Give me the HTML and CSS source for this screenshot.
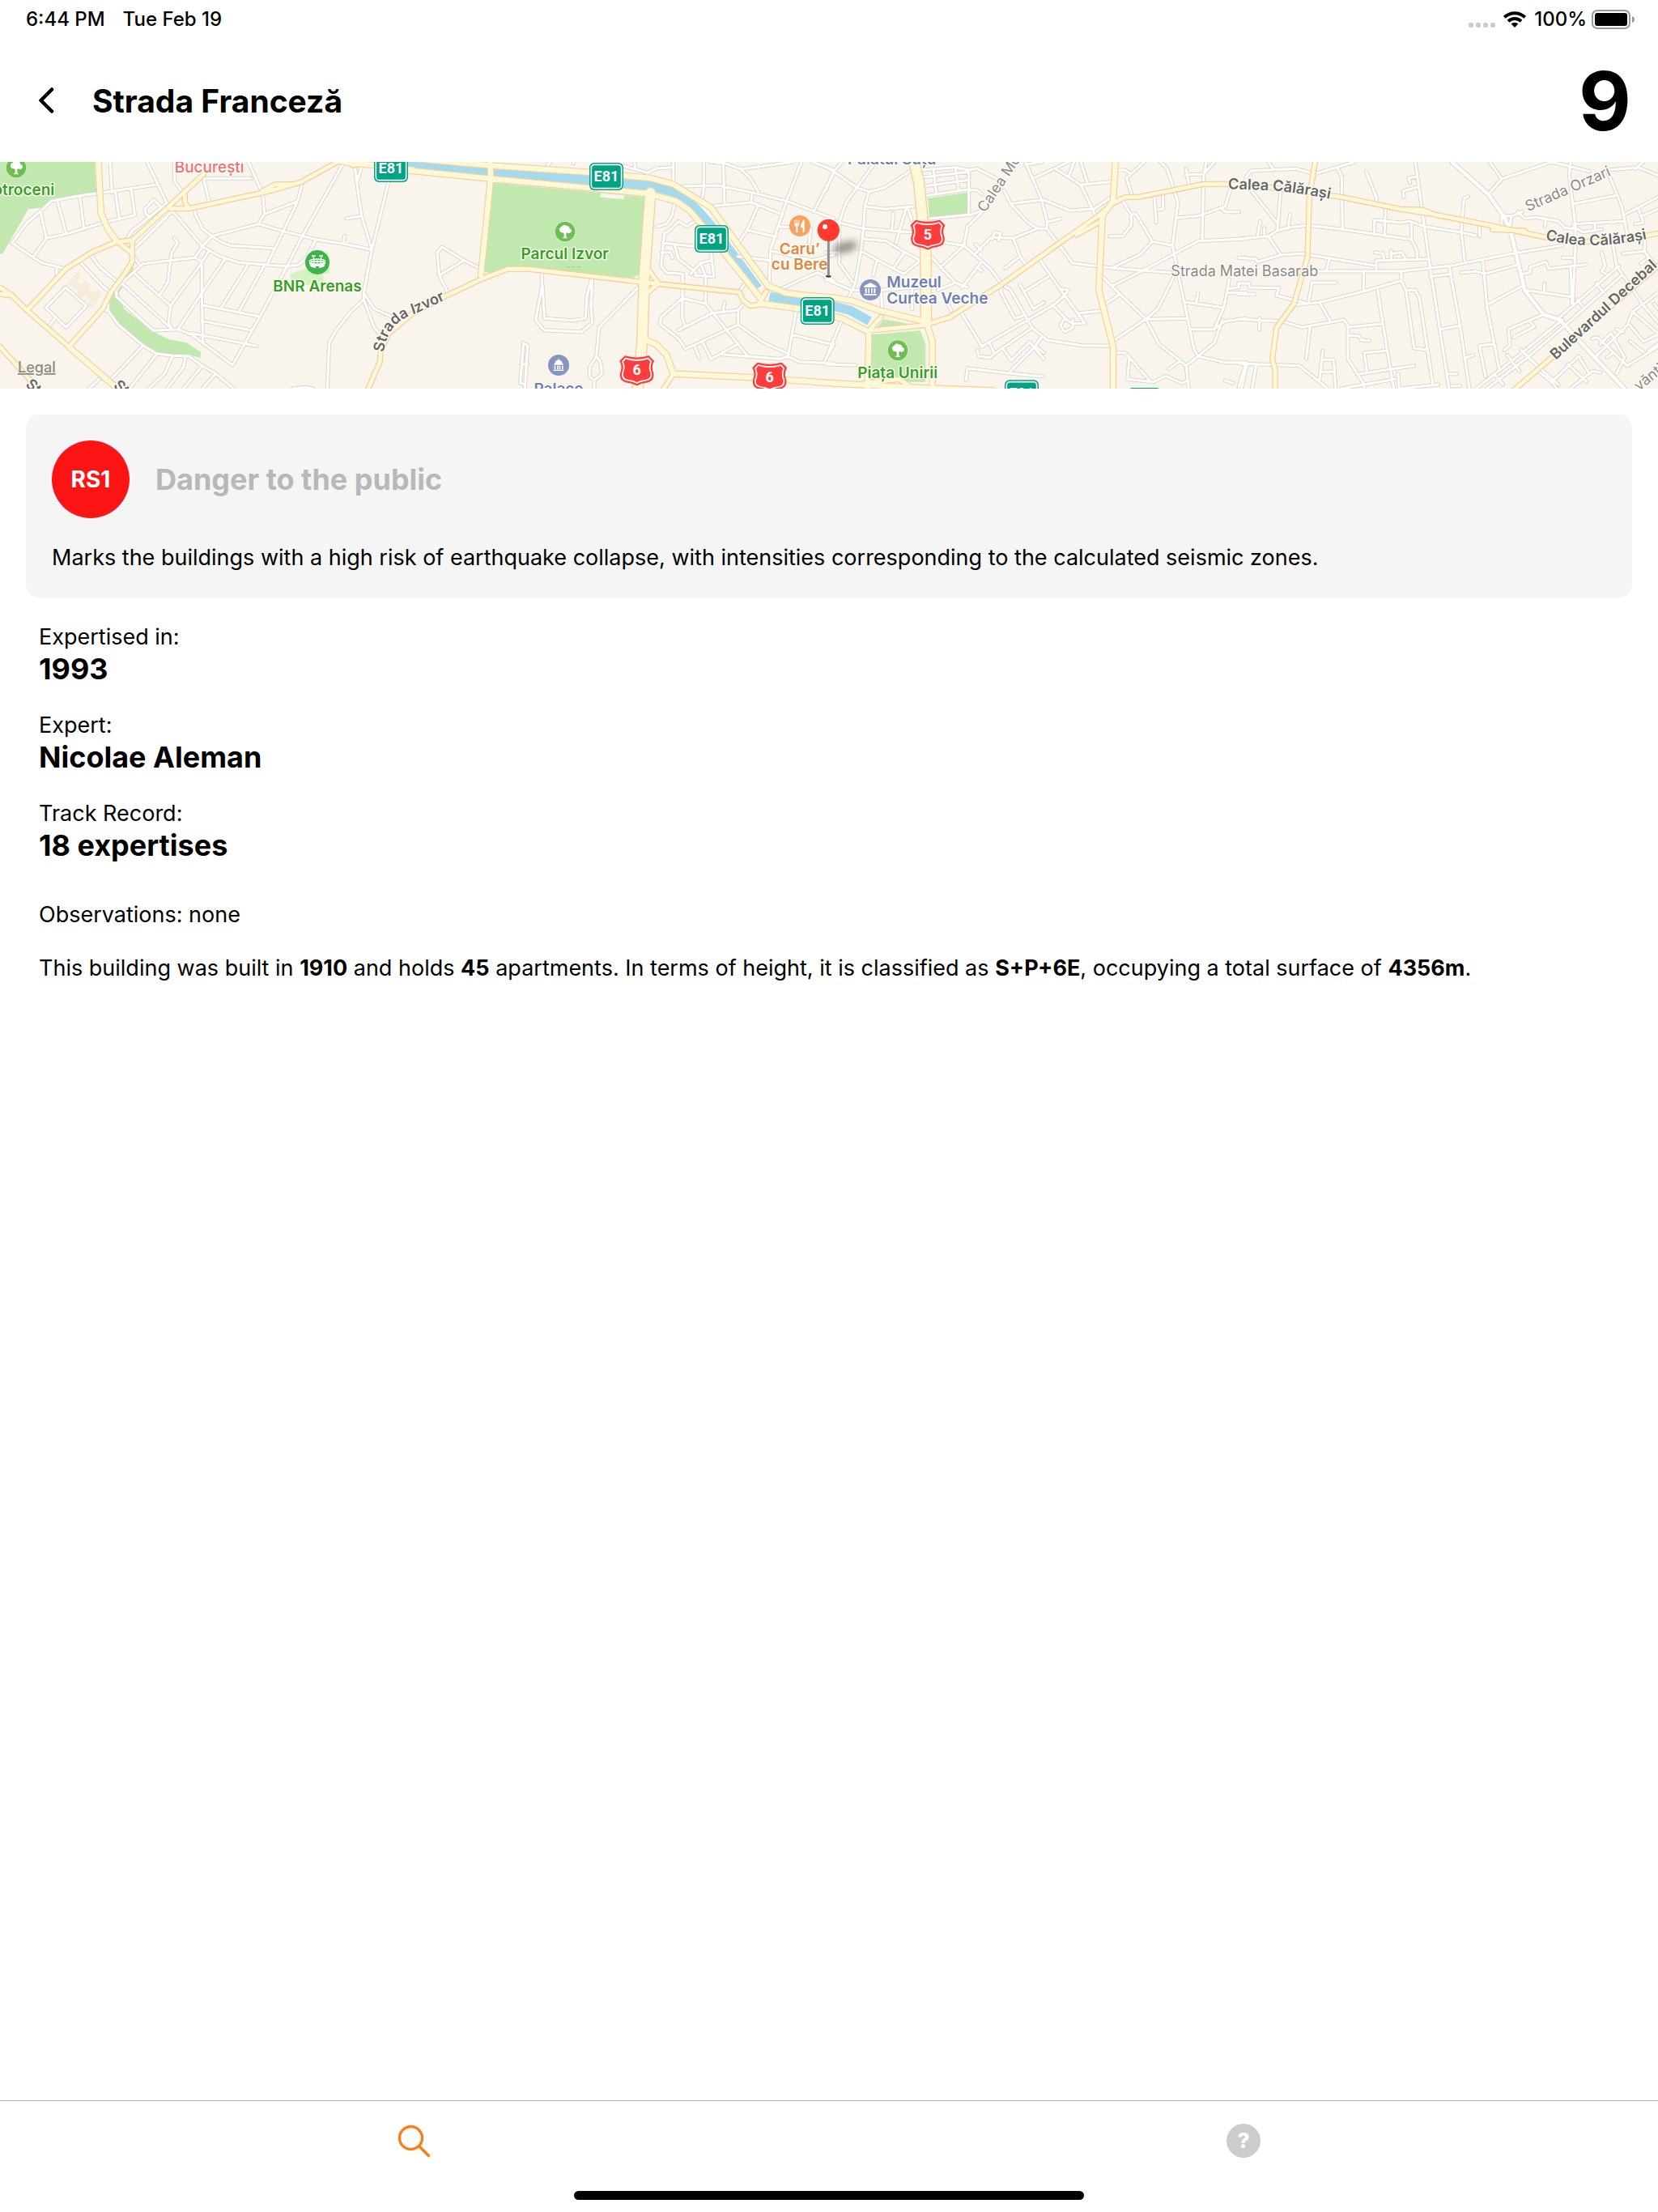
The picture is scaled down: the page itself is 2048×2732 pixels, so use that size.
FILE: index.html
```html
<!DOCTYPE html>
<html lang="en">
<head>
<meta charset="utf-8">
<meta name="viewport" content="width=device-width, initial-scale=1">
<title>Strada Franceză 9</title>
<link rel="stylesheet" href="styles.css">
</head>
<body>
<div class="status">
  <div class="status-group status-left"><span>6:44 PM</span><span>Tue Feb 19</span></div>
  <div class="status-group status-right">
    <span class="dots"><i></i><i></i><i></i><i></i></span>
    <svg class="wifi" viewBox="0 0 28 20" aria-hidden="true"><g fill="none" stroke="#000" stroke-width="4"><path d="M1.3 7.4A18.2 18.2 0 0 1 26.7 7.4"/><path d="M6 12.3A11.5 11.5 0 0 1 22 12.3"/></g><path d="M9.6 15.6A6.4 6.4 0 0 1 18.4 15.6L14 20Z"/></svg>
    <span class="percent">100%</span>
    <svg class="battery" viewBox="0 0 54 24" aria-hidden="true"><rect x="1" y="1" width="46" height="22" rx="6" fill="none" stroke="#999" stroke-width="2"/><rect x="4" y="4" width="40" height="16" rx="3"/><path d="M50 8Q53 9 53 12T50 16Z" fill="#999"/></svg>
  </div>
</div>

<header class="header">
  <button class="back" type="button" aria-label="Back"><svg viewBox="0 0 20 34" aria-hidden="true"><path d="M16 2.500L2.500 16 16 29.500" fill="none" stroke="#000" stroke-width="4.500" stroke-linecap="round" stroke-linejoin="round"/></svg></button>
  <h1 class="title">Strada Franceză</h1>
  <span class="number">9</span>
</header>

<svg class="map" viewBox="0 0 6144 840" preserveAspectRatio="xMidYMid slice" role="img" aria-label="Map of Bucharest">
  <defs>
    <filter id="soft" x="-50%" y="-80%" width="200%" height="260%"><feGaussianBlur stdDeviation="13"/></filter>
    <g id="streets">
      <path transform="translate(0 -15)" d="M408 15L415 128M545 15L622 175M372 130L296 140 190 160 150 198 100 240 45 315 122 368 158 390 240 410M372 130L585 98M150 200L172 298 122 368M172 298L245 282 383 240 500 212 486 118M213 162L246 282M296 143L311 262M427 125L442 224M646 15V85L685 140M920 15L970 125 975 150 980 208 958 245M755 76H930M755 78L775 162M210 410V435M600 185L570 155 537 188 540 208 550 215M615 170L490 270 470 300M635 200L500 335M640 198L750 328 815 365 885 388 1065 402 1108 396 1135 370 1170 305M722 190L725 212 750 262 785 290 820 312 855 325 1015 335M785 290L958 245 1050 272 1170 302 1272 318 1378 340M785 290L750 328 722 370 632 380 530 392 450 465 430 490 432 515 568 640 660 635M722 370L748 385V500L752 690M748 385L775 345M645 298L658 315 635 355 632 380 622 460 592 507M495 365L520 400M500 430L632 548M455 468L632 630M748 388L632 548 625 610 635 630M660 635L748 500 832 378M660 635L710 655 862 768 965 585 1065 400 1120 290 1275 15M1120 95L1103 160 1050 272 992 390M978 400L885 570M820 555L918 398M748 545L962 588M748 604L935 640M710 650L950 697M980 208L1100 162M1315 30L1322 90 1340 215 1378 340M1345 15L1322 90M1283 225L1340 215M1277 290L1272 318M1440 90L1378 340 1348 500V525L1300 570 1245 640 1220 685 1213 855M1348 500L1385 558 1450 588M1348 525L1385 625 1410 655M340 365L370 405 430 455M300 390L380 475 405 495M170 555L243 480 320 548 245 628ZM205 592L180 625M380 565H400L410 580 440 620 530 695 580 725 640 733 700 735 750 770 800 800 865 855M400 540V565M530 695L412 820M580 728L480 855M640 733L610 800 550 855M688 733L680 775 620 855M750 770L680 855M798 800L750 855M330 855L368 820M1085 855L1130 850 1160 855"/>
      <path transform="translate(1530 -15)" d="M240 405L190 380 108 330 90 350 98 435 132 505M98 435L190 380M478 430V480L455 600 485 638 625 645 665 610 660 550 665 450M480 470L488 595 590 602 640 595 645 510 662 450M835 480L690 628 680 735 655 775V810L672 825 700 800 695 755 680 735M672 825V855M415 855L425 695 410 685 398 835 415 840M403 765H425M510 15L490 40M595 15V20M780 30L870 55 905 38 965 35M965 15V95M820 15L825 38M868 55V75M1078 15V110L1070 165M1150 15L1155 175M1000 105L1130 102 1255 128 1385 160 1560 225M1100 15L1155 20 1215 42 1250 75 1280 125M1215 42L1410 15M1440 15L1385 160 1325 340 1320 480M1480 15L1560 45M1560 55L1485 200M1095 180L1255 165 1370 210M1258 128L1253 165M1278 180L1240 265 1200 325M1238 268L1345 292M1360 255L1430 258M1205 365L1325 380M1330 345L1480 380 1560 360M1345 495L1440 450 1500 425 1560 455M1475 262L1465 340M970 165L960 215 940 245 905 255M1045 235L1015 255 985 235 950 270 932 280 920 400 940 425 1000 430 998 590 1010 625M925 315L1060 330M922 350H955L962 370M970 325L985 375 1050 425 1045 435 1115 440 1105 350M1030 430L1065 390 1105 380M1065 390L1085 440V540M1230 465L1210 495M985 638L1110 575 1205 565 1225 540M998 520L1085 540 1160 635 1245 740M998 520L920 590 915 615 985 670 1010 708 1205 618V565M1205 618L1300 685 1390 725V740M1155 535L1150 565M1420 568L1390 735 1430 755 1560 762M1045 700L1062 742M1075 685L1105 745 1205 690M1145 728L1360 745 1390 735M1405 655L1550 690M1560 690L1525 755"/>
      <path transform="translate(3060 -15)" d="M0 35L30 50 115 110 160 125 215 112 320 45M60 15L30 50 0 120M185 15L115 110 75 165 50 240V390L100 460M160 125L145 180 140 260 130 345 110 460 85 520M145 180L220 190 325 180M0 225L50 240 140 262 315 275M250 205L245 270M300 180L260 315M302 180L318 230M140 300L225 308 275 340 350 380M130 345L250 410 290 352M190 380L175 435M250 410L290 430 350 380M0 350H50M0 450L95 490 205 490 210 575M205 490L340 480M320 490V560M60 600L0 745M0 765L110 768M355 45L480 35 530 45 560 40 640 80M360 72L530 52M365 105L528 82M370 140L520 118 562 120 578 135M400 50L410 130M480 35L492 115M530 45V210M385 225L540 210 590 190 525 255 512 325 430 312M660 120L685 170 750 240 785 262 820 262V235L800 155 740 15M685 170L805 155 905 195 1000 188M740 25L800 15M770 75L900 15M850 40L945 100 1065 88M945 100L1000 215M920 15L900 70M945 15L970 95M1060 145L1000 185M820 238L870 225M820 262L915 390 1060 408 1280 425M785 262L695 298 612 295 550 360M618 300L625 275 648 280 640 305M695 298L720 365 745 400M720 365L665 408M512 325L610 410 650 465M512 325L425 405M395 370L425 405 480 462 525 480M555 320L575 340M578 385L505 480M560 405L578 418M480 462L415 490M440 520L465 565M650 475V500L700 595 730 585M650 465L685 490 765 630 820 675 950 695 1060 697M720 470L770 560 808 535M735 495L825 440M795 380L885 510 960 612 915 615 885 595 870 620 885 645 915 630V600M875 485L898 490 885 510 845 545 750 600 575 700M840 545L895 600M940 575L1020 567M500 570L580 700M765 630L625 725 608 690M560 712L568 735 610 740 625 725M655 705L688 750 755 682 808 745M800 665L770 705 680 795M780 700L808 722M520 822L525 780 680 798 805 810M1080 45H1110L1130 60 1115 75 1135 140M1120 70L1180 15M1100 160L1132 210V250L1100 290H1052M1132 208H1150L1210 310 1285 325M1210 310L1165 358 1060 408M1218 145L1225 240M1250 140V190L1232 192M1240 15L1265 40 1305 165 1285 325 1300 400 1365 710 1380 735 1335 770M1065 722H1110L1200 825M1125 740L1118 820 1215 830 1260 808 1320 835 1340 825M1300 222L1380 215 1480 180 1500 115M1465 185L1480 200H1532M1335 40L1345 95M1335 62L1400 60M1410 15L1400 70 1395 305M1440 15L1400 60M1560 300L1380 308 1190 410 1060 475M1025 440L1090 505 1185 595 1235 690 1310 750 1335 770 1345 855M1025 550L1090 505M1070 675L1185 598 1340 595M1185 598L1230 560 1290 440M1335 535L1475 555 1495 450M1475 555L1440 635H1355M1440 635L1480 605 1560 595M1380 500L1372 540M1535 370H1560M1490 485L1530 480V465M1490 500H1560M1470 600L1440 685 1380 735 1480 758H1560M1310 755L1272 782M1560 770L1540 855M1480 825L1510 835"/>
      <path transform="translate(4590 -15)" d="M110 15L125 38M30 100L28 70 45 48 215 40 280 60 430 15M30 100L145 245 143 270M155 130L143 270 110 290 0 300M143 270L185 258 255 250 385 265 640 302 660 340 662 375M190 210L183 262M80 235L70 290M95 260V285M110 290L155 358M0 370L65 375 70 385 155 360 230 355 510 400M335 378L325 420M295 420H600L785 400 1030 352 1200 325M510 410V380L700 375M505 350L535 355 540 380M565 345V380M572 355L605 350 618 375M368 40L382 70 385 265M472 50L512 150 508 165M545 180L540 290M503 285V230L600 240 635 235 690 255 820 275 880 288M640 240V300M655 15L710 410 780 855M660 70L630 75 635 92M665 108L610 122 612 145M930 15L975 78M925 135L975 78 1160 15M838 385L825 275 835 150 850 143M893 255V290M975 260V215H1015L1050 200M1010 215L1005 260M1035 200L1060 225 1100 220 1185 235 1210 260 1240 262M1138 232L1135 255M1160 15L1300 50M1230 15L1225 60 1248 255V330L1238 540M1365 45L1420 180 1440 280M1240 170L1395 140M1240 245L1430 235M1240 255L1275 275 1345 265M1320 240V260M1370 45L1480 35 1554 65M1500 15L1470 40M1430 210L1480 185 1554 145M1480 185L1500 240 1470 245M1495 215L1554 190M1425 355L1505 345 1520 370 1490 392M1505 300V350L1554 410M1385 310L1400 400 1490 530M1345 350L1358 400 1345 420 1360 430M1200 370H1245M1285 395L1150 410 1138 385 1080 405V425L1055 430M1230 400L1235 540M1060 490L1235 515M1133 465V500M1040 395L910 430 880 420 825 425M905 380L920 550 965 780M920 545L1050 475M780 400L820 620 855 855M710 440L785 430M748 635L820 622M463 420V495M603 420V455L462 495 300 535 205 545M360 462H272L260 530M515 490L550 710 575 855M603 455L620 490 650 705 700 712M620 490H655L670 520 700 712 720 840M300 535L340 605M160 605L235 628 390 600 405 620V745L440 800 465 840M405 628L530 615M405 658L445 660 455 675 485 677M265 625L250 745M0 598L160 605M77 595V635M312 715L300 820M312 748H352L360 855M305 793H355M550 715L465 722 475 790M450 800L650 770M380 855L465 840 580 820M590 800L595 855 740 840M465 840V855M0 762L225 770 330 855M65 768L50 855M25 765L0 850M0 465H40V480L150 482 140 510 250 538M0 505H60M780 800H808M790 845H820M845 740L870 730M945 690L892 695 915 810M1130 580L1000 635 1005 695 985 712M1080 605L1095 625 1020 665M880 855L1040 730 1200 600M920 855L1070 740 1210 620 1420 435M1190 590L1410 400M1325 465L1345 490M1255 525L1275 550M1045 710L1095 760 1185 840M995 730L1040 790M950 805L980 840M1110 790L1160 830 1260 735 1300 800M1220 765L1290 830M1160 830L1180 855M1310 670L1330 665 1440 770 1554 700M1320 740L1440 620 1460 570 1554 500M1340 690L1380 650 1430 740 1400 800M1400 635L1425 645M1460 570L1554 650M1490 535L1554 610M1540 540L1554 560M1450 680L1500 720M1520 715L1554 690M1230 855L1310 790 1340 795M1450 620L1500 680 1554 655M1365 740L1390 720"/>
    </g>
    <g id="avenues">
      <path transform="translate(0 -15)" d="M755 60L620 185 490 305 430 312 340 350 245 410 100 565M490 305V385L465 425 410 500 380 560 255 700M630 188H700L990 125 1115 90 1250 15M685 135V165L695 180M970 125L1020 98H1085M0 480L45 510 100 565 255 700M0 505L45 510M0 700L100 810 140 855M430 305L485 350M1280 15L1310 28 1340 22M1365 855L1408 755 1410 720 1440 650 1530 575 1645 515"/>
      <path transform="translate(1530 -15)" d="M115 515L252 450 350 412H430L850 460 920 468 1210 498 1225 530 1250 548 1280 545 1310 495M878 420L910 465 870 500M965 800L930 855"/>
      <path transform="translate(3060 -15)" d="M380 615L460 590 650 470 860 320 1010 215 1060 170 1110 145H1160L1400 97H1500M930 285L1010 240M160 640L370 620M160 640L205 590M140 835L270 820 320 850"/>
      <path transform="translate(4590 -15)" d="M-30 98L120 110 380 145 600 190 700 205 930 250 1140 295 1250 310H1400L1554 280M283 15L262 150 255 370 205 540 140 630 125 745 135 785V855M600 190L680 192 740 215M940 265L1060 270M1020 860L1160 740 1554 400"/>
    </g>
    <g id="boulevards">
      <path transform="translate(0 -15)" d="M364 15L374 205 398 260 430 305M255 700L430 850M1260 12L1530 45"/>
      <path transform="translate(1530 -15)" d="M-80 -5L285 28 660 54 880 75 965 98 1105 184 1316 474 1380 500 1440 508 1560 518 1630 530 1730 566 1890 605M-30 45L285 77 870 132 975 160 1025 195 1085 266 1290 522M1290 540L1440 560 1590 595 1690 645M288 15V80L252 435M862 675L900 690 940 730 965 800 1280 815 1560 835 1830 850 2150 862"/>
      <path transform="translate(3060 -15)" d="M1073 15L1065 160 1025 215 1012 490 1065 700V855M370 600L395 680V855M160 645L155 855"/>
    </g>
    <g id="arteries">
      <path transform="translate(1530 -15)" d="M880 130L857 450 850 680 833 855"/>
      <path transform="translate(3060 -15)" d="M325 5L345 90 370 340 372 610"/>
    </g>
    <symbol id="tree" viewBox="-40 -40 80 80"><circle r="39" fill="#fff" opacity=".6"/><circle r="37" fill="#6fbe54"/><path d="M-13 -18A10 10 0 0 1 4 -21A9 9 0 0 1 16 -11A8 8 0 0 1 20 4Q14 9 7 4L4 6V20L9 23V25H-9V23L-4 20V8Q-7 2 -12 4A8 8 0 0 1 -20 -3Q-24 -14 -13 -18Z" fill="#fff"/></symbol>
    <symbol id="euro" viewBox="-64 -52 128 104"><rect x="-63" y="-51" width="126" height="102" rx="18" fill="#00a382"/><rect x="-56" y="-44" width="112" height="88" rx="12" fill="none" stroke="#fff" stroke-width="5"/><text class="shield-text" y="18">E81</text></symbol>
    <symbol id="shield" viewBox="-66 -60 132 120"><g fill="#ff3c3c" stroke-linejoin="round"><path d="M-44 -53Q0 -40 44 -53L62 -35Q50 -15 60 10Q64 38 35 43Q15 45 0 54Q-15 45 -35 43Q-64 38 -60 10Q-50 -15 -62 -35Z" stroke="#ff3c3c" stroke-width="4"/><path d="M-42 -45Q0 -32 42 -45L53 -33Q43 -13 53 10Q56 33 33 36Q13 38 0 46Q-13 38 -33 36Q-56 33 -53 10Q-43 -13 -53 -33Z" stroke="#fff" stroke-width="5"/></g></symbol>
    <path id="p-izvor" d="M1422 706Q1434 594 1540 562L1770 455"/>
    <path id="p-mosilor" d="M3650 190L3860 -125"/>
    <path id="p-cal1" d="M4550 100L4720 106Q4850 118 5060 164"/>
    <path id="p-orzari" d="M5662 184L6080 2"/>
    <path id="p-cal2" d="M5726 288Q5850 318 5985 304T6260 240"/>
    <path id="p-decebal" d="M5765 735L6240 297"/>
  </defs>
  <rect width="6144" height="840" fill="#f9f4ec"/>
  <g fill="#c1e8af">
    <path d="M0 0H350L358 115 290 125 190 143 150 170 105 175 10 340H0ZM490 375L495 395 440 485 460 545 570 630 625 657 690 670 745 705 742 727 700 713 640 713 580 703 530 675 470 625 415 575 402 530 410 495 465 415ZM1828 77L2390 130 2373 415 2345 430 1960 390 1880 393 1820 415 1792 405ZM3438 135L3585 113 3590 190 3445 213ZM3245 620L3275 583 3425 610ZM3230 640L3410 625 3430 675V815H3225Z"/>
    <path fill="#d3f3c3" d="M1075 415L1135 395 1215 335 1222 410 1198 415V455H1080Z"/>
    <path fill="#f9f4ec" d="M2225 116L2313 124V138L2225 131Z"/>
    <path fill="#f6ecd9" d="M290 405L300 420 287 445 300 455 318 440 335 453 328 467 350 485 362 472 378 485 345 540 328 528 335 513 318 490 302 505 285 490 290 475 245 455Z"/>
  </g>
  <path d="M2100 389H2155" stroke="#8fcf74" stroke-width="3" stroke-dasharray="10 10"/>
  <path d="M1500 8L1815 37 2250 73 2420 90 2490 110 2545 140 2595 190 2655 260 2808 468M2852 498L2970 522 3090 534 3150 550 3222 590" fill="none" stroke="#a5daee" stroke-width="34"/>
  <g class="roads">
    <use href="#streets" class="street-case"/>
    <path class="street-case wide" d="M5380 0L5515 120 5575 205 5600 265 5650 475 5720 565 5780 585 5910 725 6020 840"/>
    <use href="#streets" class="street"/>
    <path class="street wide" d="M5380 0L5515 120 5575 205 5600 265 5650 475 5720 565 5780 585 5910 725 6020 840"/>
    <use href="#avenues" class="avenue-case"/>
    <use href="#boulevards" class="boulevard-case"/>
    <use href="#arteries" class="artery-case"/>
    <use href="#avenues" class="avenue"/>
    <use href="#boulevards" class="boulevard"/>
    <use href="#arteries" class="artery"/>
  </g>

  <g class="labels">
    <text class="city" x="776" y="40">București</text>
    <text class="green end" x="202" y="122">Cotroceni</text>
    <text class="green" x="1176" y="479">BNR Arenas</text>
    <text class="green" x="2093" y="359">Parcul Izvor</text>
    <text class="green" x="3326" y="801">Piața Unirii</text>
    <text class="blue" x="3305" y="8">Palatul Suțu</text>
    <text class="blue" x="2070" y="862">Palace</text>
    <text class="blue start" x="3286" y="465">Muzeul</text>
    <text class="blue start" x="3286" y="526">Curtea Veche</text>
    <text class="orange" x="2963" y="341">Caru’</text>
    <text class="orange" x="2963" y="400">cu Bere</text>
    <text class="minor" x="4612" y="424">Strada Matei Basarab</text>
    <text class="legal" x="66" y="780">Legal</text>
    <text class="major start" transform="translate(92 828) rotate(42)">Strada</text>
    <text class="major start" transform="translate(418 832) rotate(42)">Strada</text>
    <text class="minor start" transform="translate(6074 850) rotate(-39)">vănți</text>
    <text class="major start"><textPath href="#p-izvor">Strada Izvor</textPath></text>
    <text class="minor start"><textPath href="#p-mosilor">Calea Moșilor</textPath></text>
    <text class="major start"><textPath href="#p-cal1">Calea Călărași</textPath></text>
    <text class="minor start"><textPath href="#p-orzari">Strada Orzari</textPath></text>
    <text class="major start"><textPath href="#p-cal2">Calea Călărași</textPath></text>
    <text class="major start"><textPath href="#p-decebal">Bulevardul Decebal</textPath></text>
  </g>

  <use href="#tree" x="20" y="-19" width="80" height="80"/>
  <use href="#tree" x="2054" y="218" width="80" height="80"/>
  <use href="#tree" x="3287" y="658" width="80" height="80"/>
  <g transform="translate(1176 372)"><circle r="45" fill="#3db54a"/><g fill="none" stroke="#fff" stroke-width="4"><ellipse cy="-3" rx="29" ry="9"/><path d="M-24 -3H24M-12 -8V2M0 -8V2M12 -8V2M-14 -12V-24M14 -12V-24M-21 -24H-7M7 -24H21"/></g><path d="M-31 0Q0 16 31 0L25 16Q15 21 6 21V15H-6V21Q-15 21 -25 16Z" fill="#fff"/></g>
  <g transform="translate(2070 753)"><circle r="39" fill="#8796c1"/><path d="M-1 -27H1V-20Q13 -17 14 -6H17V-1H-17V-6H-14Q-13 -17 -1 -20ZM-16 2H-11V16H-16ZM-6 2H-1V16H-6ZM2 2H7V16H2ZM12 2H17V16H12ZM-19 17H19V21H-19Z" fill="#fff"/></g>
  <g transform="translate(3225 474)"><circle r="39" fill="#8796c1"/><path d="M0 -27L23 -14V-9H-23V-14ZM-19 -6H-13V13H-19ZM-8 -6H-3V13H-8ZM3 -6H8V13H3ZM13 -6H19V13H13ZM-23 15H23V20H-23Z" fill="#fff"/></g>
  <g transform="translate(2964 237)"><circle r="39" fill="#f6a261"/><path d="M-20 -22H-17V-8H-13V-22H-9V-8H-5V-22H-2V-6Q-3 1 -8 2V24H-14V2Q-20 0 -20 -6ZM17 -24V24H11V7H3Q4 -16 17 -24Z" fill="#fff"/></g>
  <use href="#euro" x="1385" y="-28" width="128" height="104"/>
  <use href="#euro" x="2183" y="2" width="128" height="104"/>
  <use href="#euro" x="2573" y="233" width="128" height="104"/>
  <use href="#euro" x="2965" y="500" width="128" height="104"/>
  <use href="#euro" x="3722" y="807" width="128" height="104"/>
  <use href="#euro" x="4177" y="836" width="128" height="104"/>
  <use href="#shield" x="2294" y="713" width="132" height="120"/><text class="shield-text" x="2360" y="790">6</text>
  <use href="#shield" x="2786" y="738" width="132" height="120"/><text class="shield-text" x="2852" y="815">6</text>
  <use href="#shield" x="3372" y="210" width="132" height="120"/><text class="shield-text" x="3438" y="287">5</text>
  <ellipse cx="3132" cy="316" rx="46" ry="20" transform="rotate(-14 3132 316)" fill="#55524c" opacity=".6" filter="url(#soft)"/>
  <ellipse cx="3070" cy="424" rx="10" ry="4" fill="#333"/>
  <path d="M3070 285V422" stroke="#8f9094" stroke-width="9"/>
  <circle cx="3070" cy="253" r="41" fill="#ff3b30"/><circle cx="3057" cy="240" r="9" fill="#fff"/>
</svg>

<main class="main">
  <section class="card">
    <div class="risk"><span class="badge">RS1</span><h2 class="risk-title">Danger to the public</h2></div>
    <p class="text">Marks the buildings with a high risk of earthquake collapse, with intensities corresponding to the calculated seismic zones.</p>
  </section>
  <section class="details">
    <dl class="facts">
      <div><dt>Expertised in:</dt><dd>1993</dd></div>
      <div><dt>Expert:</dt><dd>Nicolae Aleman</dd></div>
      <div><dt>Track Record:</dt><dd>18 expertises</dd></div>
    </dl>
    <div class="notes">
      <p class="text">Observations: none</p>
      <p class="text">This building was built in <b>1910</b> and holds <b>45</b> apartments. In terms of height, it is classified as <b>S+P+6E</b>, occupying a total surface of <b>4356m</b>.</p>
    </div>
  </section>
</main>

<footer class="footer">
  <nav class="tabs">
    <a class="tab" href="#search" aria-label="Search"><svg viewBox="0 0 50 50" aria-hidden="true"><g fill="none" stroke="#fc7d14" stroke-width="3.300" stroke-linecap="round"><circle cx="20.500" cy="21.500" r="14"/><path d="M31 32L42.500 43.500"/></g></svg></a>
    <a class="tab" href="#help" aria-label="Help"><span class="help">?</span></a>
  </nav>
  <div class="home"></div>
</footer>
</body>
</html>
```
FILE: styles.css
```css
* { box-sizing: border-box; margin: 0; }

body {
  min-height: 100vh;
  display: flex;
  flex-direction: column;
  background: #fff;
  color: #000;
  font-family: Inter, "Liberation Sans", sans-serif;
  font-size: 27px;
  line-height: 34px;
}

.status {
  display: flex;
  justify-content: space-between;
  height: 48px;
  padding: 0 28px 0 32px;
  font-size: 24px;
  font-weight: 500;
}
.status-group { display: flex; align-items: center; }
.status-left { gap: 22px; }
.dots { display: flex; gap: 3px; margin: 14px 10px 0 0; }
.dots i { width: 6px; height: 6px; border-radius: 2px; background: #ccc; }
.wifi { width: 28px; height: 20px; margin-right: 10px; }
.percent { margin-right: 6px; }
.battery { width: 54px; height: 24px; }

.header {
  display: flex;
  align-items: center;
  height: 152px;
  padding: 2px 33px 0 48px;
}
.back {
  display: flex;
  width: 66px;
  padding: 0;
  border: 0;
  background: none;
  cursor: pointer;
}
.back svg { width: 20px; height: 34px; }
.title { flex: 1; font-size: 39px; line-height: 48px; font-weight: 700; }
.number { font-size: 100px; line-height: 120px; font-weight: 700; }

.map { display: block; width: 100%; height: 280px; }
.roads { fill: none; stroke-linecap: round; stroke-linejoin: round; }
.street-case { stroke: #ddd6cb; stroke-width: 15px; }
.street { stroke: #fff; stroke-width: 9px; }
.street-case.wide { stroke-width: 20px; }
.street.wide { stroke-width: 14px; }
.avenue-case { stroke: #f8cf9e; stroke-width: 22px; }
.avenue { stroke: #fdf9d8; stroke-width: 14px; }
.boulevard-case { stroke: #f8cf9e; stroke-width: 26px; }
.boulevard { stroke: #fdf9d8; stroke-width: 19px; }
.artery-case { stroke: #f8cf9e; stroke-width: 44px; }
.artery { stroke: #fdf9d8; stroke-width: 36px; }
.labels text {
  font-size: 57px;
  font-weight: 600;
  text-anchor: middle;
  stroke: #fffdf8;
  stroke-width: 8px;
  stroke-linejoin: round;
  paint-order: stroke;
}
.labels .start { text-anchor: start; }
.labels .end { text-anchor: end; }
.labels .green { fill: #35a022; }
.labels .blue { fill: #6b80b5; }
.labels .orange { fill: #e08840; }
.labels .city { fill: #f07070; font-weight: 500; }
.labels .major { fill: #666; font-size: 55px; }
.labels .minor { fill: #8a8a8a; font-size: 54px; font-weight: 400; }
.labels .legal {
  fill: #8c8a86;
  font-size: 54px;
  font-weight: 500;
  text-anchor: start;
  text-decoration: underline;
  stroke: none;
}
.shield-text {
  fill: #fff;
  font-family: Roboto, sans-serif;
  font-size: 54px;
  font-weight: 700;
  text-anchor: middle;
}

.main { flex: 1; padding: 32px; }
.card {
  display: flex;
  flex-direction: column;
  gap: 32px;
  padding: 32px;
  border-radius: 16px;
  background: #f5f5f5;
}
.risk { display: flex; align-items: center; gap: 32px; }
.badge {
  display: flex;
  align-items: center;
  justify-content: center;
  width: 96px;
  height: 96px;
  border-radius: 50%;
  background: #fa1414;
  color: #fff;
  font-size: 28px;
  font-weight: 700;
}
.risk-title { color: #b8b8b8; font-size: 36px; line-height: 44px; font-weight: 700; }

.details { display: flex; flex-direction: column; gap: 47px; padding: 32px 16px; }
.facts { display: flex; flex-direction: column; gap: 31px; }
.facts dd { font-size: 36px; line-height: 44px; font-weight: 700; }
.notes { display: flex; flex-direction: column; gap: 32px; }

.footer { height: 138px; border-top: 1px solid #b2b2b2; }
.tabs { display: flex; height: 98px; }
.tab {
  display: flex;
  flex: 1;
  align-items: center;
  justify-content: center;
  text-decoration: none;
}
.tab svg { width: 50px; height: 50px; }
.help {
  width: 42px;
  height: 42px;
  border-radius: 50%;
  background: #ccc;
  color: #fff;
  font-size: 26px;
  line-height: 42px;
  font-weight: 800;
  text-align: center;
}
.home {
  width: 630px;
  max-width: 60%;
  height: 11px;
  margin: 13px auto 0;
  border-radius: 6px;
  background: #000;
}
```
